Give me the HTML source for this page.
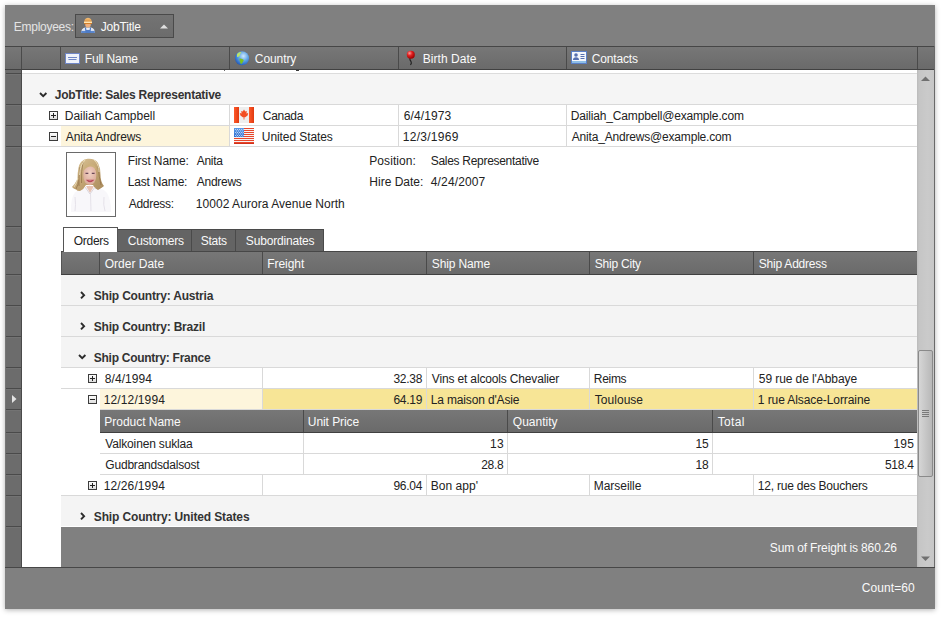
<!DOCTYPE html>
<html><head><meta charset="utf-8"><style>
html,body{margin:0;padding:0;}
body{width:943px;height:617px;position:relative;overflow:hidden;background:#ffffff;font-family:"Liberation Sans", sans-serif;}
body div, body svg{position:absolute;}
.t{white-space:nowrap;line-height:20px;height:20px;}
</style></head><body>
<div style="left:5px;top:5px;width:930px;height:604px;background:#808080;box-shadow:0 1px 5px 0 rgba(0,0,0,0.3)"></div><div class="t" style="left:13.80px;top:16.84px;color:#e4e4e4;font-size:12px;font-weight:400;letter-spacing:-0.267px;">Employees:</div><div style="left:75px;top:14px;width:99px;height:24px;background:linear-gradient(#737373,#6c6c6c);border:1px solid #4a4a4a;box-sizing:border-box"></div><div class="t" style="left:100.80px;top:16.84px;color:#fafafa;font-size:12px;font-weight:400;letter-spacing:-0.200px;">JobTitle</div><svg style="left:160px;top:23.5px" width="8" height="5"><path d="M0 4.6 L4 0.4 L8 4.6 Z" fill="#e0e0e0"/></svg><svg style="left:80px;top:17px" width="16" height="17" viewBox="0 0 16 17">
<defs><linearGradient id="hat" x1="0" y1="0" x2="0" y2="1"><stop offset="0" stop-color="#f6c27a"/><stop offset="1" stop-color="#cf7a26"/></linearGradient>
<linearGradient id="bd" x1="0" y1="0" x2="0" y2="1"><stop offset="0" stop-color="#f4f6fb"/><stop offset="1" stop-color="#b8c8e8"/></linearGradient></defs>
<path d="M1.2 16 Q1 11.2 5 10.4 L11 10.4 Q15 11.2 14.8 16 Z" fill="url(#bd)"/>
<path d="M1.3 14 L14.7 14 L14.8 16 L1.2 16 Z" fill="#5a86cc"/>
<path d="M4.8 10.6 L5.6 16 L10.4 16 L11.2 10.6 L10 10.6 L9.6 13 L6.4 13 L6 10.6 Z" fill="#4f7cc6"/>
<path d="M5.2 6 L5.4 9.2 Q8 11.6 10.6 9.2 L10.8 6 Z" fill="#eeae7c"/>
<path d="M4 6.9 Q3.9 0.8 8 0.8 Q12.1 0.8 12 6.9 Z" fill="url(#hat)"/>
<rect x="4" y="4.6" width="8" height="1.4" fill="#ffe6b4"/>
</svg><div style="left:5px;top:46px;width:930px;height:1px;background:#464646"></div><div style="left:5px;top:47px;width:930px;height:22px;background:linear-gradient(#777777,#6a6a6a)"></div><div style="left:5px;top:69px;width:930px;height:1px;background:#414141"></div><div style="left:21px;top:47px;width:1px;height:22px;background:#4a4a4a"></div><div style="left:60px;top:47px;width:1px;height:22px;background:#4a4a4a"></div><div style="left:229px;top:47px;width:1px;height:22px;background:#4a4a4a"></div><div style="left:398px;top:47px;width:1px;height:22px;background:#4a4a4a"></div><div style="left:566px;top:47px;width:1px;height:22px;background:#4a4a4a"></div><div style="left:917px;top:47px;width:1px;height:22px;background:#4a4a4a"></div><div class="t" style="left:84.80px;top:48.84px;color:#fafafa;font-size:12px;font-weight:400;letter-spacing:-0.200px;">Full Name</div><div class="t" style="left:254.80px;top:48.84px;color:#fafafa;font-size:12px;font-weight:400;letter-spacing:-0.083px;">Country</div><div class="t" style="left:422.80px;top:48.84px;color:#fafafa;font-size:12px;font-weight:400;letter-spacing:0.044px;">Birth Date</div><div class="t" style="left:591.80px;top:48.84px;color:#fafafa;font-size:12px;font-weight:400;letter-spacing:-0.171px;">Contacts</div><svg style="left:65px;top:53px" width="16" height="12" viewBox="0 0 16 12">
<rect x="0.5" y="0.5" width="14" height="10" fill="#eef2fa" stroke="#6f86c6"/>
<rect x="3" y="4" width="9" height="1" fill="#6f86c6"/><rect x="3.5" y="6" width="8" height="1" fill="#6f86c6"/>
</svg><svg style="left:234px;top:50px" width="16" height="16" viewBox="0 0 16 16">
<defs><radialGradient id="gl" cx="0.6" cy="0.35" r="0.7"><stop offset="0" stop-color="#cfe8fb"/><stop offset="0.5" stop-color="#5ea3e6"/><stop offset="1" stop-color="#1e56b8"/></radialGradient></defs>
<circle cx="8" cy="8.2" r="7" fill="url(#gl)"/>
<path d="M3 4 Q5 1.5 7.5 2 Q6 4 5.5 6 Q4.5 7 3 7 Z" fill="#b9e36a"/>
<path d="M5.5 8.5 Q8 8 9.8 10 Q9 12.5 7 14.5 Q6 12 5.5 10 Z" fill="#7cc21e"/>
</svg><svg style="left:404px;top:50px" width="12" height="16" viewBox="0 0 12 16">
<defs><radialGradient id="pn" cx="0.35" cy="0.3" r="0.7"><stop offset="0" stop-color="#ff9a9a"/><stop offset="0.45" stop-color="#e02020"/><stop offset="1" stop-color="#a00000"/></radialGradient></defs>
<path d="M6 8 Q5.5 10 7 11.5 Q8 13 6.5 15" stroke="#222" stroke-width="1.2" fill="none"/>
<circle cx="6.8" cy="4.8" r="4" fill="url(#pn)"/>
</svg><svg style="left:571px;top:51px" width="16" height="13" viewBox="0 0 16 13">
<rect x="0" y="0" width="16" height="13" fill="#5b80c8"/>
<rect x="1" y="1" width="14" height="9" fill="#f4f7fc"/>
<rect x="1" y="10" width="14" height="2" fill="#8ebfe8"/>
<circle cx="5" cy="4" r="1.8" fill="#5670b0"/><path d="M2 9 Q2 6.2 5 6.2 Q8 6.2 8 9 Z" fill="#5670b0"/>
<rect x="9.5" y="3" width="4" height="1" fill="#5670b0"/><rect x="9.5" y="5" width="4" height="1" fill="#5670b0"/><rect x="9.5" y="7" width="4" height="1" fill="#5670b0"/>
</svg><div style="left:22px;top:70px;width:895px;height:497px;background:#ffffff"></div><div style="left:5px;top:70px;width:16px;height:497px;background:#6c6c6c"></div><div style="left:5px;top:70px;width:1px;height:497px;background:#767676"></div><div style="left:21px;top:70px;width:1px;height:497px;background:#4a4a4a"></div><div style="left:6px;top:73px;width:15px;height:1px;background:#4a4a4a"></div><div style="left:6px;top:74px;width:15px;height:1px;background:#737373"></div><div style="left:6px;top:104px;width:15px;height:1px;background:#4a4a4a"></div><div style="left:6px;top:105px;width:15px;height:1px;background:#737373"></div><div style="left:6px;top:125px;width:15px;height:1px;background:#4a4a4a"></div><div style="left:6px;top:126px;width:15px;height:1px;background:#737373"></div><div style="left:6px;top:146px;width:15px;height:1px;background:#4a4a4a"></div><div style="left:6px;top:147px;width:15px;height:1px;background:#737373"></div><div style="left:6px;top:226px;width:15px;height:1px;background:#4a4a4a"></div><div style="left:6px;top:227px;width:15px;height:1px;background:#737373"></div><div style="left:6px;top:251px;width:15px;height:1px;background:#4a4a4a"></div><div style="left:6px;top:252px;width:15px;height:1px;background:#737373"></div><div style="left:6px;top:274px;width:15px;height:1px;background:#4a4a4a"></div><div style="left:6px;top:275px;width:15px;height:1px;background:#737373"></div><div style="left:6px;top:305px;width:15px;height:1px;background:#4a4a4a"></div><div style="left:6px;top:306px;width:15px;height:1px;background:#737373"></div><div style="left:6px;top:336px;width:15px;height:1px;background:#4a4a4a"></div><div style="left:6px;top:337px;width:15px;height:1px;background:#737373"></div><div style="left:6px;top:367px;width:15px;height:1px;background:#4a4a4a"></div><div style="left:6px;top:368px;width:15px;height:1px;background:#737373"></div><div style="left:6px;top:388px;width:15px;height:1px;background:#4a4a4a"></div><div style="left:6px;top:389px;width:15px;height:1px;background:#737373"></div><div style="left:6px;top:409px;width:15px;height:1px;background:#4a4a4a"></div><div style="left:6px;top:410px;width:15px;height:1px;background:#737373"></div><div style="left:6px;top:432px;width:15px;height:1px;background:#4a4a4a"></div><div style="left:6px;top:433px;width:15px;height:1px;background:#737373"></div><div style="left:6px;top:453px;width:15px;height:1px;background:#4a4a4a"></div><div style="left:6px;top:454px;width:15px;height:1px;background:#737373"></div><div style="left:6px;top:474px;width:15px;height:1px;background:#4a4a4a"></div><div style="left:6px;top:475px;width:15px;height:1px;background:#737373"></div><div style="left:6px;top:495px;width:15px;height:1px;background:#4a4a4a"></div><div style="left:6px;top:496px;width:15px;height:1px;background:#737373"></div><div style="left:6px;top:526px;width:15px;height:1px;background:#4a4a4a"></div><div style="left:6px;top:527px;width:15px;height:1px;background:#737373"></div><svg style="left:12px;top:395px" width="6" height="9"><path d="M0 0 L4.5 4 L0 8 Z" fill="#e4e4e4"/></svg><div style="left:22px;top:73px;width:895px;height:1px;background:#dcdcdc"></div><div style="left:224px;top:70px;width:1px;height:1px;background:#6a6a6a"></div><div style="left:296px;top:70px;width:3px;height:1px;background:#3a3a3a"></div><div style="left:22px;top:74px;width:895px;height:30px;background:#f5f5f5"></div><div style="left:22px;top:104px;width:895px;height:1px;background:#d9d9d9"></div><svg style="left:38.5px;top:91.5px" width="9" height="6" viewBox="0 0 9 6"><path d="M1 1 L4.2 4.1 L7.4 1" stroke="#2b2b2b" stroke-width="1.9" fill="none"/></svg><div class="t" style="left:54.80px;top:84.84px;color:#333333;font-size:12px;font-weight:700;letter-spacing:-0.255px;">JobTitle: Sales Representative</div><div style="left:22px;top:125px;width:895px;height:1px;background:#d9d9d9"></div><div style="left:229px;top:105px;width:1px;height:20px;background:#d9d9d9"></div><div style="left:398px;top:105px;width:1px;height:20px;background:#d9d9d9"></div><div style="left:566px;top:105px;width:1px;height:20px;background:#d9d9d9"></div><svg style="left:49px;top:111px" width="9" height="9" viewBox="0 0 9 9"><defs><linearGradient id="eb" x1="0" y1="0" x2="0" y2="1"><stop offset="0" stop-color="#fff"/><stop offset="1" stop-color="#dcdcdc"/></linearGradient></defs><rect x="0.5" y="0.5" width="8" height="8" fill="url(#eb)" stroke="#3c3c3c"/><rect x="2" y="4" width="5" height="1" fill="#222"/><rect x="4" y="2" width="1" height="5" fill="#222"/></svg><div class="t" style="left:64.80px;top:105.84px;color:#222222;font-size:12px;font-weight:400;letter-spacing:-0.027px;">Dailiah Campbell</div><div class="t" style="left:262.80px;top:105.84px;color:#222222;font-size:12px;font-weight:400;letter-spacing:-0.300px;">Canada</div><div class="t" style="left:403.80px;top:105.84px;color:#222222;font-size:12px;font-weight:400;letter-spacing:0.086px;">6/4/1973</div><div class="t" style="left:570.80px;top:105.84px;color:#222222;font-size:12px;font-weight:400;letter-spacing:-0.167px;">Dailiah_Campbell@example.com</div><svg style="left:234px;top:107px" width="20" height="16" viewBox="0 0 20 16">
<defs><linearGradient id="ca" x1="0" y1="0" x2="1" y2="0"><stop offset="0" stop-color="#ff5a2a"/><stop offset="1" stop-color="#e03a10"/></linearGradient></defs>
<rect x="0" y="0" width="20" height="16" fill="#eeeeee"/>
<rect x="0" y="0" width="5" height="16" fill="url(#ca)"/><rect x="15" y="0" width="5" height="16" fill="url(#ca)"/>
<path d="M10 2.5 L11.2 4.6 L12.8 4 L12.4 6.6 L14.2 6 L13.6 8.4 L11.2 10.2 L10.4 10.2 L10.4 12.6 L9.6 12.6 L9.6 10.2 L8.8 10.2 L6.4 8.4 L5.8 6 L7.6 6.6 L7.2 4 L8.8 4.6 Z" fill="#f24e22"/>
</svg><div style="left:61px;top:126px;width:168px;height:20px;background:#fdf5dc"></div><div style="left:22px;top:146px;width:895px;height:1px;background:#d9d9d9"></div><div style="left:229px;top:126px;width:1px;height:20px;background:#d9d9d9"></div><div style="left:398px;top:126px;width:1px;height:20px;background:#d9d9d9"></div><div style="left:566px;top:126px;width:1px;height:20px;background:#d9d9d9"></div><svg style="left:49px;top:132px" width="9" height="9" viewBox="0 0 9 9"><defs><linearGradient id="eb" x1="0" y1="0" x2="0" y2="1"><stop offset="0" stop-color="#fff"/><stop offset="1" stop-color="#dcdcdc"/></linearGradient></defs><rect x="0.5" y="0.5" width="8" height="8" fill="url(#eb)" stroke="#3c3c3c"/><rect x="2" y="4" width="5" height="1" fill="#222"/></svg><div class="t" style="left:65.80px;top:126.84px;color:#222222;font-size:12px;font-weight:400;letter-spacing:-0.100px;">Anita Andrews</div><div class="t" style="left:261.80px;top:126.84px;color:#222222;font-size:12px;font-weight:400;letter-spacing:-0.083px;">United States</div><div class="t" style="left:402.80px;top:126.84px;color:#222222;font-size:12px;font-weight:400;letter-spacing:0.275px;">12/3/1969</div><div class="t" style="left:571.80px;top:126.84px;color:#222222;font-size:12px;font-weight:400;letter-spacing:-0.188px;">Anita_Andrews@example.com</div><svg style="left:234px;top:128px" width="20" height="16" viewBox="0 0 20 16">
<defs><linearGradient id="usb" x1="0" y1="0" x2="0" y2="1"><stop offset="0" stop-color="#5b9be8"/><stop offset="1" stop-color="#2f6fd0"/></linearGradient></defs>
<rect x="0" y="0" width="20" height="16" fill="#f6f2f2"/><rect x="0" y="0" width="20" height="1" fill="#e8472c"/><rect x="0" y="2" width="20" height="1" fill="#e8472c"/><rect x="0" y="4" width="20" height="1" fill="#e8472c"/><rect x="0" y="6" width="20" height="1" fill="#e8472c"/><rect x="0" y="8" width="20" height="1" fill="#e8472c"/><rect x="0" y="10" width="20" height="1" fill="#e8472c"/><rect x="0" y="12" width="20" height="1" fill="#e8472c"/><rect x="0" y="14" width="20" height="1" fill="#e8472c"/><rect x="0" y="15" width="20" height="1" fill="#d0301a"/>
<rect x="0" y="0" width="10" height="9" fill="url(#usb)"/>
<g fill="#dfe9fb"><rect x="1.20" y="1.00" width="0.9" height="0.9"/><rect x="2.15" y="2.50" width="0.9" height="0.9"/><rect x="1.20" y="4.00" width="0.9" height="0.9"/><rect x="2.15" y="5.50" width="0.9" height="0.9"/><rect x="1.20" y="7.00" width="0.9" height="0.9"/><rect x="2.15" y="8.50" width="0.9" height="0.9"/><rect x="3.10" y="1.00" width="0.9" height="0.9"/><rect x="4.05" y="2.50" width="0.9" height="0.9"/><rect x="3.10" y="4.00" width="0.9" height="0.9"/><rect x="4.05" y="5.50" width="0.9" height="0.9"/><rect x="3.10" y="7.00" width="0.9" height="0.9"/><rect x="4.05" y="8.50" width="0.9" height="0.9"/><rect x="5.00" y="1.00" width="0.9" height="0.9"/><rect x="5.95" y="2.50" width="0.9" height="0.9"/><rect x="5.00" y="4.00" width="0.9" height="0.9"/><rect x="5.95" y="5.50" width="0.9" height="0.9"/><rect x="5.00" y="7.00" width="0.9" height="0.9"/><rect x="5.95" y="8.50" width="0.9" height="0.9"/><rect x="6.90" y="1.00" width="0.9" height="0.9"/><rect x="7.85" y="2.50" width="0.9" height="0.9"/><rect x="6.90" y="4.00" width="0.9" height="0.9"/><rect x="7.85" y="5.50" width="0.9" height="0.9"/><rect x="6.90" y="7.00" width="0.9" height="0.9"/><rect x="7.85" y="8.50" width="0.9" height="0.9"/><rect x="8.80" y="1.00" width="0.9" height="0.9"/><rect x="8.80" y="4.00" width="0.9" height="0.9"/><rect x="8.80" y="7.00" width="0.9" height="0.9"/></g>
</svg><div style="left:66px;top:152px;width:50px;height:65px;border:1px solid #6a6a6a;box-sizing:border-box;background:#fff"></div><svg style="left:67px;top:153px" width="48" height="63" viewBox="0 0 48 63">
<defs><linearGradient id="hair" x1="0" y1="0" x2="1" y2="1"><stop offset="0" stop-color="#dcc89c"/><stop offset="0.5" stop-color="#c4a674"/><stop offset="1" stop-color="#a88a5c"/></linearGradient>
<radialGradient id="skin" cx="0.5" cy="0.4" r="0.65"><stop offset="0" stop-color="#f0cfc4"/><stop offset="1" stop-color="#d8a894"/></radialGradient></defs>
<path d="M4 59 Q3.5 45 8 39.5 Q13 35.5 18 34.5 L28 34.5 Q36 35 40 40 Q44 46 44 59 Z" fill="#f8f7fa"/>
<path d="M8 44 Q9 52 8 58 M37 44 Q36 52 38 58 M23.5 41 L24 58" stroke="#e0dce4" stroke-width="0.8" fill="none"/>
<path d="M5 34 Q8 31 10.5 26 Q10.5 13 14 9 Q18 5 22 5.8 Q28 5.8 31 10 Q33.5 15 33.5 22 Q33.5 29 37 33 Q34 35.5 31 37 Q27 35 26 32 L19 32 Q17 36 13 38 Q10 38 9 36.5 Q7 36 5 34 Z" fill="url(#hair)"/>
<path d="M13 14 Q11.5 24 12 33 M31 13 Q32 24 34 32 M16 9 Q14 18 14.5 30 M9 36 Q12 31 11 27" stroke="#8a6a40" stroke-width="0.8" fill="none" opacity="0.8"/><path d="M18 7 Q13 12 12.5 22 M27 7 Q32 11 32 19 M7 34 Q10 30 10.8 25" stroke="#f0e4c2" stroke-width="0.9" fill="none" opacity="0.9"/>
<path d="M19 33 L23 40 L27 33 Z" fill="#e8c4b4"/>
<path d="M18 34 L23 41 L28 34" stroke="#d8d2da" stroke-width="0.9" fill="none"/>
<ellipse cx="22.8" cy="22" rx="6.6" ry="10.2" fill="url(#skin)"/>
<path d="M16.2 18 Q18 11 23.5 11 Q29 11.5 29.8 18 Q27.5 13.5 23 13.5 Q19 14 16.2 18 Z" fill="#ccb07c"/>
<path d="M18.5 20.3 L21.3 20.3 M24.8 20.3 L27.6 20.3" stroke="#6a4858" stroke-width="1.2"/>
<path d="M20.2 27.3 Q23 30 26 27.3 Z" stroke="#b8485a" stroke-width="1.1" fill="#ffffff"/>
</svg><div class="t" style="left:127.80px;top:150.84px;color:#222222;font-size:12px;font-weight:400;letter-spacing:-0.100px;">First Name:</div><div class="t" style="left:196.80px;top:150.84px;color:#222222;font-size:12px;font-weight:400;letter-spacing:-0.300px;">Anita</div><div class="t" style="left:127.80px;top:171.84px;color:#222222;font-size:12px;font-weight:400;letter-spacing:-0.189px;">Last Name:</div><div class="t" style="left:196.80px;top:171.84px;color:#222222;font-size:12px;font-weight:400;letter-spacing:-0.283px;">Andrews</div><div class="t" style="left:128.80px;top:193.84px;color:#222222;font-size:12px;font-weight:400;letter-spacing:-0.300px;">Address:</div><div class="t" style="left:195.80px;top:193.84px;color:#222222;font-size:12px;font-weight:400;letter-spacing:0.046px;">10002 Aurora Avenue North</div><div class="t" style="left:369.30px;top:150.84px;color:#222222;font-size:12px;font-weight:400;letter-spacing:0.062px;">Position:</div><div class="t" style="left:430.80px;top:150.84px;color:#222222;font-size:12px;font-weight:400;letter-spacing:-0.300px;">Sales Representative</div><div class="t" style="left:369.30px;top:171.84px;color:#222222;font-size:12px;font-weight:400;letter-spacing:0.000px;">Hire Date:</div><div class="t" style="left:430.80px;top:171.84px;color:#222222;font-size:12px;font-weight:400;letter-spacing:0.138px;">4/24/2007</div><div style="left:61px;top:251px;width:856px;height:1px;background:#474747"></div><div style="left:61px;top:252px;width:856px;height:22px;background:linear-gradient(#777777,#6a6a6a)"></div><div style="left:61px;top:274px;width:856px;height:1px;background:#404040"></div><div style="left:61px;top:252px;width:1px;height:22px;background:#555"></div><div style="left:99px;top:252px;width:1px;height:22px;background:#4a4a4a"></div><div style="left:262px;top:252px;width:1px;height:22px;background:#4a4a4a"></div><div style="left:426px;top:252px;width:1px;height:22px;background:#4a4a4a"></div><div style="left:589px;top:252px;width:1px;height:22px;background:#4a4a4a"></div><div style="left:753px;top:252px;width:1px;height:22px;background:#4a4a4a"></div><div class="t" style="left:104.80px;top:253.84px;color:#fafafa;font-size:12px;font-weight:400;letter-spacing:-0.011px;">Order Date</div><div class="t" style="left:267.30px;top:253.84px;color:#fafafa;font-size:12px;font-weight:400;letter-spacing:-0.067px;">Freight</div><div class="t" style="left:431.80px;top:253.84px;color:#fafafa;font-size:12px;font-weight:400;letter-spacing:-0.125px;">Ship Name</div><div class="t" style="left:594.80px;top:253.84px;color:#fafafa;font-size:12px;font-weight:400;letter-spacing:-0.225px;">Ship City</div><div class="t" style="left:758.80px;top:253.84px;color:#fafafa;font-size:12px;font-weight:400;letter-spacing:-0.227px;">Ship Address</div><div style="left:117px;top:229px;width:207px;height:22px;background:#646464"></div><div style="left:117px;top:229px;width:1px;height:22px;background:#4a4a4a"></div><div style="left:191px;top:229px;width:1px;height:22px;background:#4a4a4a"></div><div style="left:235px;top:229px;width:1px;height:22px;background:#4a4a4a"></div><div style="left:323px;top:229px;width:1px;height:22px;background:#4a4a4a"></div><div style="left:117px;top:229px;width:207px;height:1px;background:#4a4a4a"></div><div style="left:63px;top:227px;width:55px;height:25px;background:#fff;border:1px solid #555;border-bottom:none;box-sizing:border-box"></div><div class="t" style="left:73.80px;top:230.84px;color:#222222;font-size:12px;font-weight:400;letter-spacing:-0.300px;">Orders</div><div class="t" style="left:127.80px;top:230.84px;color:#fafafa;font-size:12px;font-weight:400;letter-spacing:-0.213px;">Customers</div><div class="t" style="left:200.80px;top:230.84px;color:#fafafa;font-size:12px;font-weight:400;letter-spacing:-0.300px;">Stats</div><div class="t" style="left:245.80px;top:230.84px;color:#fafafa;font-size:12px;font-weight:400;letter-spacing:-0.173px;">Subordinates</div><div style="left:61px;top:275px;width:856px;height:30px;background:#f4f4f4"></div><div style="left:61px;top:305px;width:856px;height:1px;background:#d9d9d9"></div><svg style="left:79.5px;top:291px" width="6" height="9" viewBox="0 0 6 9"><path d="M1 1 L4.1 4.2 L1 7.4" stroke="#2b2b2b" stroke-width="1.9" fill="none"/></svg><div class="t" style="left:93.80px;top:285.84px;color:#333333;font-size:12px;font-weight:700;letter-spacing:-0.200px;">Ship Country: Austria</div><div style="left:61px;top:306px;width:856px;height:30px;background:#f4f4f4"></div><div style="left:61px;top:336px;width:856px;height:1px;background:#d9d9d9"></div><svg style="left:79.5px;top:322px" width="6" height="9" viewBox="0 0 6 9"><path d="M1 1 L4.1 4.2 L1 7.4" stroke="#2b2b2b" stroke-width="1.9" fill="none"/></svg><div class="t" style="left:93.80px;top:316.84px;color:#333333;font-size:12px;font-weight:700;letter-spacing:-0.200px;">Ship Country: Brazil</div><div style="left:61px;top:337px;width:856px;height:30px;background:#f4f4f4"></div><div style="left:61px;top:367px;width:856px;height:1px;background:#d9d9d9"></div><svg style="left:77.5px;top:354px" width="9" height="6" viewBox="0 0 9 6"><path d="M1 1 L4.2 4.1 L7.4 1" stroke="#2b2b2b" stroke-width="1.9" fill="none"/></svg><div class="t" style="left:93.80px;top:347.84px;color:#333333;font-size:12px;font-weight:700;letter-spacing:-0.274px;">Ship Country: France</div><div style="left:61px;top:388px;width:856px;height:1px;background:#d9d9d9"></div><div style="left:262px;top:368px;width:1px;height:20px;background:#d9d9d9"></div><div style="left:426px;top:368px;width:1px;height:20px;background:#d9d9d9"></div><div style="left:589px;top:368px;width:1px;height:20px;background:#d9d9d9"></div><div style="left:753px;top:368px;width:1px;height:20px;background:#d9d9d9"></div><svg style="left:88px;top:374px" width="9" height="9" viewBox="0 0 9 9"><defs><linearGradient id="eb" x1="0" y1="0" x2="0" y2="1"><stop offset="0" stop-color="#fff"/><stop offset="1" stop-color="#dcdcdc"/></linearGradient></defs><rect x="0.5" y="0.5" width="8" height="8" fill="url(#eb)" stroke="#3c3c3c"/><rect x="2" y="4" width="5" height="1" fill="#222"/><rect x="4" y="2" width="1" height="5" fill="#222"/></svg><div class="t" style="left:104.80px;top:368.84px;color:#222222;font-size:12px;font-weight:400;letter-spacing:0.071px;">8/4/1994</div><div class="t" style="left:393.50px;top:368.84px;color:#222222;font-size:12px;font-weight:400;letter-spacing:-0.300px;">32.38</div><div class="t" style="left:431.80px;top:368.84px;color:#222222;font-size:12px;font-weight:400;letter-spacing:-0.154px;">Vins et alcools Chevalier</div><div class="t" style="left:593.80px;top:368.84px;color:#222222;font-size:12px;font-weight:400;letter-spacing:-0.300px;">Reims</div><div class="t" style="left:758.80px;top:368.84px;color:#222222;font-size:12px;font-weight:400;letter-spacing:-0.082px;">59 rue de l'Abbaye</div><div style="left:100px;top:389px;width:162px;height:20px;background:#fdf5dc"></div><div style="left:263px;top:389px;width:654px;height:20px;background:#f7e596"></div><div style="left:100px;top:409px;width:817px;height:1px;background:#d9d9d9"></div><div style="left:262px;top:389px;width:1px;height:20px;background:#d9d9d9"></div><div style="left:426px;top:389px;width:1px;height:20px;background:#d9d9d9"></div><div style="left:589px;top:389px;width:1px;height:20px;background:#d9d9d9"></div><div style="left:753px;top:389px;width:1px;height:20px;background:#d9d9d9"></div><svg style="left:88px;top:395px" width="9" height="9" viewBox="0 0 9 9"><defs><linearGradient id="eb" x1="0" y1="0" x2="0" y2="1"><stop offset="0" stop-color="#fff"/><stop offset="1" stop-color="#dcdcdc"/></linearGradient></defs><rect x="0.5" y="0.5" width="8" height="8" fill="url(#eb)" stroke="#3c3c3c"/><rect x="2" y="4" width="5" height="1" fill="#222"/></svg><div class="t" style="left:103.80px;top:389.84px;color:#222222;font-size:12px;font-weight:400;letter-spacing:0.111px;">12/12/1994</div><div class="t" style="left:393.50px;top:389.84px;color:#222222;font-size:12px;font-weight:400;letter-spacing:-0.300px;">64.19</div><div class="t" style="left:430.80px;top:389.84px;color:#222222;font-size:12px;font-weight:400;letter-spacing:-0.160px;">La maison d'Asie</div><div class="t" style="left:594.80px;top:389.84px;color:#222222;font-size:12px;font-weight:400;letter-spacing:0.029px;">Toulouse</div><div class="t" style="left:757.80px;top:389.84px;color:#222222;font-size:12px;font-weight:400;letter-spacing:-0.085px;">1 rue Alsace-Lorraine</div><div style="left:100px;top:410px;width:817px;height:22px;background:linear-gradient(#777777,#6a6a6a)"></div><div style="left:100px;top:432px;width:817px;height:1px;background:#404040"></div><div style="left:303px;top:410px;width:1px;height:22px;background:#4a4a4a"></div><div style="left:507px;top:410px;width:1px;height:22px;background:#4a4a4a"></div><div style="left:712px;top:410px;width:1px;height:22px;background:#4a4a4a"></div><div class="t" style="left:104.30px;top:411.84px;color:#fafafa;font-size:12px;font-weight:400;letter-spacing:-0.027px;">Product Name</div><div class="t" style="left:307.80px;top:411.84px;color:#fafafa;font-size:12px;font-weight:400;letter-spacing:-0.067px;">Unit Price</div><div class="t" style="left:512.80px;top:411.84px;color:#fafafa;font-size:12px;font-weight:400;letter-spacing:0.014px;">Quantity</div><div class="t" style="left:717.80px;top:411.84px;color:#fafafa;font-size:12px;font-weight:400;letter-spacing:0.300px;">Total</div><div style="left:100px;top:453px;width:817px;height:1px;background:#d9d9d9"></div><div style="left:303px;top:433px;width:1px;height:20px;background:#d9d9d9"></div><div style="left:507px;top:433px;width:1px;height:20px;background:#d9d9d9"></div><div style="left:712px;top:433px;width:1px;height:20px;background:#d9d9d9"></div><div class="t" style="left:105.30px;top:433.84px;color:#222222;font-size:12px;font-weight:400;letter-spacing:-0.160px;">Valkoinen suklaa</div><div class="t" style="left:490.10px;top:433.84px;color:#222222;font-size:12px;font-weight:400;letter-spacing:0.200px;">13</div><div class="t" style="left:695.50px;top:433.84px;color:#222222;font-size:12px;font-weight:400;letter-spacing:-0.200px;">15</div><div class="t" style="left:893.50px;top:433.84px;color:#222222;font-size:12px;font-weight:400;letter-spacing:0.150px;">195</div><div style="left:100px;top:474px;width:817px;height:1px;background:#d9d9d9"></div><div style="left:303px;top:454px;width:1px;height:20px;background:#d9d9d9"></div><div style="left:507px;top:454px;width:1px;height:20px;background:#d9d9d9"></div><div style="left:712px;top:454px;width:1px;height:20px;background:#d9d9d9"></div><div class="t" style="left:105.30px;top:454.84px;color:#222222;font-size:12px;font-weight:400;letter-spacing:-0.200px;">Gudbrandsdalsost</div><div class="t" style="left:481.20px;top:454.84px;color:#222222;font-size:12px;font-weight:400;letter-spacing:-0.300px;">28.8</div><div class="t" style="left:695.60px;top:454.84px;color:#222222;font-size:12px;font-weight:400;letter-spacing:-0.300px;">18</div><div class="t" style="left:884.90px;top:454.84px;color:#222222;font-size:12px;font-weight:400;letter-spacing:-0.275px;">518.4</div><div style="left:61px;top:495px;width:856px;height:1px;background:#d9d9d9"></div><div style="left:262px;top:475px;width:1px;height:20px;background:#d9d9d9"></div><div style="left:426px;top:475px;width:1px;height:20px;background:#d9d9d9"></div><div style="left:589px;top:475px;width:1px;height:20px;background:#d9d9d9"></div><div style="left:753px;top:475px;width:1px;height:20px;background:#d9d9d9"></div><svg style="left:88px;top:481px" width="9" height="9" viewBox="0 0 9 9"><defs><linearGradient id="eb" x1="0" y1="0" x2="0" y2="1"><stop offset="0" stop-color="#fff"/><stop offset="1" stop-color="#dcdcdc"/></linearGradient></defs><rect x="0.5" y="0.5" width="8" height="8" fill="url(#eb)" stroke="#3c3c3c"/><rect x="2" y="4" width="5" height="1" fill="#222"/><rect x="4" y="2" width="1" height="5" fill="#222"/></svg><div class="t" style="left:103.80px;top:475.84px;color:#222222;font-size:12px;font-weight:400;letter-spacing:0.111px;">12/26/1994</div><div class="t" style="left:393.50px;top:475.84px;color:#222222;font-size:12px;font-weight:400;letter-spacing:-0.300px;">96.04</div><div class="t" style="left:430.80px;top:475.84px;color:#222222;font-size:12px;font-weight:400;letter-spacing:0.029px;">Bon app'</div><div class="t" style="left:593.80px;top:475.84px;color:#222222;font-size:12px;font-weight:400;letter-spacing:-0.050px;">Marseille</div><div class="t" style="left:757.80px;top:475.84px;color:#222222;font-size:12px;font-weight:400;letter-spacing:-0.221px;">12, rue des Bouchers</div><div style="left:61px;top:496px;width:856px;height:30px;background:#f4f4f4"></div><svg style="left:79.5px;top:512px" width="6" height="9" viewBox="0 0 6 9"><path d="M1 1 L4.1 4.2 L1 7.4" stroke="#2b2b2b" stroke-width="1.9" fill="none"/></svg><div class="t" style="left:93.80px;top:506.84px;color:#333333;font-size:12px;font-weight:700;letter-spacing:-0.138px;">Ship Country: United States</div><div style="left:61px;top:527px;width:856px;height:40px;background:#808080"></div><div class="t" style="left:769.80px;top:537.84px;color:#fafafa;font-size:12px;font-weight:400;letter-spacing:-0.152px;">Sum of Freight is 860.26</div><div style="left:5px;top:567px;width:930px;height:1px;background:#474747"></div><div class="t" style="left:861.70px;top:577.84px;color:#fafafa;font-size:12px;font-weight:400;letter-spacing:0.086px;">Count=60</div><div style="left:917px;top:70px;width:17px;height:497px;background:linear-gradient(90deg,#bababa 0px,#c5c5c5 2px,#cacaca 60%,#c7c7c7)"></div><div style="left:934px;top:46px;width:1px;height:521px;background:#6a6a6a"></div><svg style="left:921px;top:76px" width="9" height="6"><path d="M0 5 L4.5 0.5 L9 5 Z" fill="#707070"/></svg><svg style="left:921px;top:556px" width="9" height="6"><path d="M0 0.5 L4.5 5 L9 0.5 Z" fill="#707070"/></svg><div style="left:918px;top:350px;width:15px;height:127px;background:linear-gradient(90deg,#d6d6d6,#b8b8b8);border:1px solid #8a8a8a;border-radius:2px;box-sizing:border-box"></div><div style="left:922px;top:410px;width:7px;height:1px;background:#7a7a7a"></div><div style="left:922px;top:412px;width:7px;height:1px;background:#7a7a7a"></div><div style="left:922px;top:414px;width:7px;height:1px;background:#7a7a7a"></div><div style="left:922px;top:416px;width:7px;height:1px;background:#7a7a7a"></div>
</body></html>
